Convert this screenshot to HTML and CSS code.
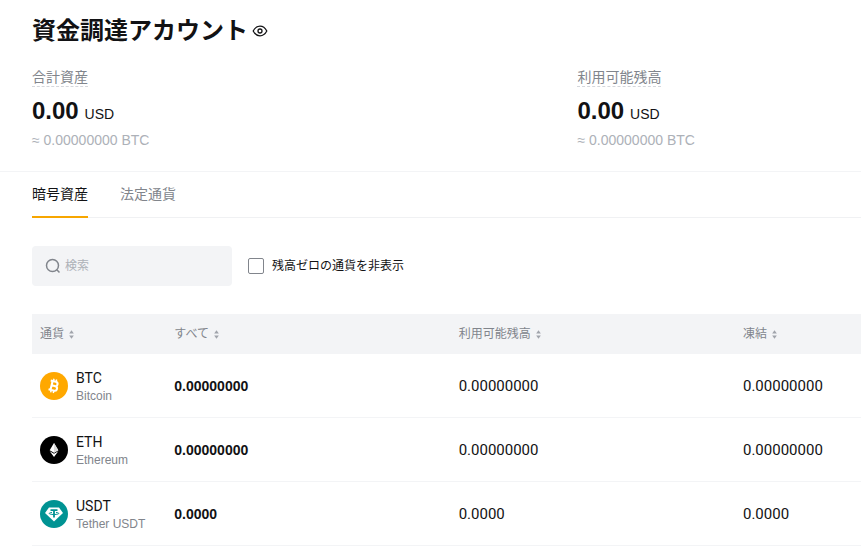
FILE: index.html
```html
<!DOCTYPE html>
<html lang="ja">
<head>
    <meta charset="UTF-8">
    <meta name="viewport" content="width=device-width, initial-scale=1.0">
    <title>資金調達アカウント</title>
    <link rel="stylesheet" href="styles.css">
</head>
<body>
    <svg class="sprite" aria-hidden="true">
        <symbol id="sort" viewBox="0 0 6 10">
            <path d="M3 0l2.800 3.800H.2zM3 10L.2 6.200h5.600z" fill="currentColor"/>
        </symbol>
    </svg>

    <header class="account">
        <div class="title">
            <h1>資金調達アカウント</h1>
            <button class="eye" type="button" aria-label="残高を隠す">
                <svg width="16" height="16" viewBox="0 0 16 16" fill="none" stroke="currentColor" stroke-width="1.3">
                    <path d="M1.2 8C2.8 5 5.2 3.2 8 3.2S13.2 5 14.8 8C13.2 11 10.8 12.8 8 12.8S2.8 11 1.2 8z"/>
                    <circle cx="8" cy="8" r="2"/>
                </svg>
            </button>
        </div>
        <div class="summary">
            <div class="balance">
                <span class="label">合計資産</span>
                <p class="value"><strong>0.00</strong> USD</p>
                <p class="approx">≈ 0.00000000 BTC</p>
            </div>
            <div class="balance">
                <span class="label">利用可能残高</span>
                <p class="value"><strong>0.00</strong> USD</p>
                <p class="approx">≈ 0.00000000 BTC</p>
            </div>
        </div>
    </header>

    <main class="assets">
        <nav class="tabs">
            <button class="tab active" type="button">暗号資産</button>
            <button class="tab" type="button">法定通貨</button>
        </nav>

        <form class="filters">
            <label class="search">
                <svg width="16" height="16" viewBox="0 0 16 16" fill="none" stroke="currentColor" stroke-width="1.5">
                    <circle cx="7.5" cy="7.5" r="6"/>
                    <path d="M11.8 11.8l2.7 2.7"/>
                </svg>
                <input type="text" placeholder="検索" aria-label="検索">
            </label>
            <label class="hide-zero">
                <input type="checkbox">
                残高ゼロの通貨を非表示
            </label>
        </form>

        <table class="coins">
            <thead>
                <tr>
                    <th class="col-coin"><button type="button">通貨<svg class="sort"><use href="#sort"/></svg></button></th>
                    <th class="col-amount"><button type="button">すべて<svg class="sort"><use href="#sort"/></svg></button></th>
                    <th class="col-amount"><button type="button">利用可能残高<svg class="sort"><use href="#sort"/></svg></button></th>
                    <th><button type="button">凍結<svg class="sort"><use href="#sort"/></svg></button></th>
                </tr>
            </thead>
            <tbody>
                <tr>
                    <td>
                        <div class="coin">
                            <svg class="logo" viewBox="0 0 28 28">
                                <circle cx="14" cy="14" r="14" fill="#ffa800"/>
                                <g transform="rotate(14 14 14)" fill="none" stroke="#fff">
                                    <path d="M9.5 9.5h5.3a2.2 2.2 0 0 1 0 4.4h-3.3h3.8a2.3 2.3 0 0 1 0 4.6H9.5M11.5 9.500v9" stroke-width="2.1"/>
                                    <path d="M12.3 7v2.5M15 7v2.5M12.3 18.5V21M15 18.5V21" stroke-width="1.5"/>
                                </g>
                            </svg>
                            <div>
                                <div class="symbol">BTC</div>
                                <div class="name">Bitcoin</div>
                            </div>
                        </div>
                    </td>
                    <td class="total">0.00000000</td>
                    <td>0.00000000</td>
                    <td>0.00000000</td>
                </tr>
                <tr>
                    <td>
                        <div class="coin">
                            <svg class="logo" viewBox="0 0 28 28">
                                <circle cx="14" cy="14" r="14" fill="#000"/>
                                <path d="M14 7l4.300 7.200L14 16.700l-4.300-2.500z" fill="#fff"/>
                                <path d="M14 7l4.300 7.200L14 16.700z" fill="#ddd"/>
                                <path d="M9.700 15.200l4.300 2.500 4.300-2.500L14 21z" fill="#fff"/>
                            </svg>
                            <div>
                                <div class="symbol">ETH</div>
                                <div class="name">Ethereum</div>
                            </div>
                        </div>
                    </td>
                    <td class="total">0.00000000</td>
                    <td>0.00000000</td>
                    <td>0.00000000</td>
                </tr>
                <tr>
                    <td>
                        <div class="coin">
                            <svg class="logo" viewBox="0 0 28 28">
                                <circle cx="14" cy="14" r="14" fill="#009393"/>
                                <path d="M9 7.5h10l4 5.500L14 21.500 5 13z" fill="#fff"/>
                                <path d="M10.5 10.2h7M14 10v7.500" fill="none" stroke="#009393" stroke-width="1.8"/>
                                <path d="M12 12.500c-4 .3-4 2 2 2s6-1.700 2-2" fill="none" stroke="#009393" stroke-width="1"/>
                            </svg>
                            <div>
                                <div class="symbol">USDT</div>
                                <div class="name">Tether USDT</div>
                            </div>
                        </div>
                    </td>
                    <td class="total">0.0000</td>
                    <td>0.0000</td>
                    <td>0.0000</td>
                </tr>
            </tbody>
        </table>
    </main>
</body>
</html>
```

FILE: styles.css
```css
* {
    box-sizing: border-box;
}
body {
    margin: 0;
    font-family: "Liberation Sans", "Noto Sans CJK JP", sans-serif;
    font-size: 14px;
    line-height: 20px;
    color: #121214;
    background: #fff;
}
h1, p {
    margin: 0;
}
button, input {
    font: inherit;
    color: inherit;
}
button {
    padding: 0;
    border: 0;
    background: none;
    cursor: pointer;
}
.sprite {
    display: none;
}

/* account header */
.account {
    padding: 13px 0 21px 32px;
    border-bottom: 1px solid #f3f4f6;
}
.title {
    display: flex;
    align-items: center;
    gap: 4px;
    margin-bottom: 18px;
}
.title h1 {
    font-size: 24px;
    line-height: 36px;
}
.eye svg {
    display: block;
}
.summary {
    display: grid;
    grid-template-columns: 65.8% 1fr;
}
.label {
    display: inline-block;
    line-height: 18px;
    color: #81858c;
    border-bottom: 1px dashed #d5d7dc;
}
.value {
    margin-top: 8px;
    line-height: 32px;
}
.value strong {
    margin-right: 2px;
    font-size: 24px;
}
.approx {
    color: #adb1b8;
}

/* asset list */
.assets {
    padding-left: 32px;
}
.tabs {
    display: flex;
    gap: 32px;
    border-bottom: 1px solid #f0f1f3;
}
.tab {
    height: 46px;
    margin-bottom: -1px;
    border-bottom: 2px solid transparent;
    color: #81858c;
}
.tab.active {
    color: #121214;
    border-color: #f7a600;
}
.filters {
    display: flex;
    align-items: center;
    gap: 16px;
    margin: 28px 0;
    font-size: 12px;
}
.search {
    display: flex;
    align-items: center;
    gap: 4px;
    width: 200px;
    height: 40px;
    padding: 0 13px;
    border-radius: 4px;
    background: #f3f4f6;
    color: #81858c;
}
.search svg {
    flex: none;
}
.search input {
    width: 100%;
    padding: 0;
    border: 0;
    outline: 0;
    background: none;
    color: #121214;
}
.search input::placeholder {
    color: #adb1b8;
}
.hide-zero {
    display: flex;
    align-items: center;
    gap: 8px;
}
.hide-zero input {
    appearance: none;
    width: 16px;
    height: 16px;
    margin: 0;
    border: 1px solid #81858c;
    border-radius: 2px;
}
.hide-zero input:checked {
    background: #f7a600;
}
.coins {
    width: 100%;
    table-layout: fixed;
    border-spacing: 0;
}
.coins th {
    height: 40px;
    padding: 0 0 0 8px;
    background: #f3f4f6;
    color: #81858c;
    font-size: 12px;
    font-weight: normal;
    text-align: left;
}
.coins th button {
    display: flex;
    align-items: center;
    gap: 5px;
}
.col-coin {
    width: 16.2%;
}
.col-amount {
    width: 34.3%;
}
.sort {
    width: 5px;
    height: 9px;
    color: #a0a4ab;
}
.coins td {
    height: 64px;
    padding: 0 0 0 8px;
    border-bottom: 1px solid #f3f4f6;
    font-family: Roboto, sans-serif;
    font-size: 15px;
}
.coins .total {
    font-family: "Liberation Sans", sans-serif;
    font-size: 14px;
    font-weight: bold;
}
.coin {
    display: flex;
    align-items: center;
    gap: 8px;
}
.logo {
    flex: none;
    width: 28px;
    height: 28px;
}
.coins .symbol {
    font-size: 14px;
    line-height: 20px;
}
.name {
    font-family: "Liberation Sans", sans-serif;
    font-size: 12px;
    line-height: 16px;
    color: #81858c;
    white-space: nowrap;
}
```
